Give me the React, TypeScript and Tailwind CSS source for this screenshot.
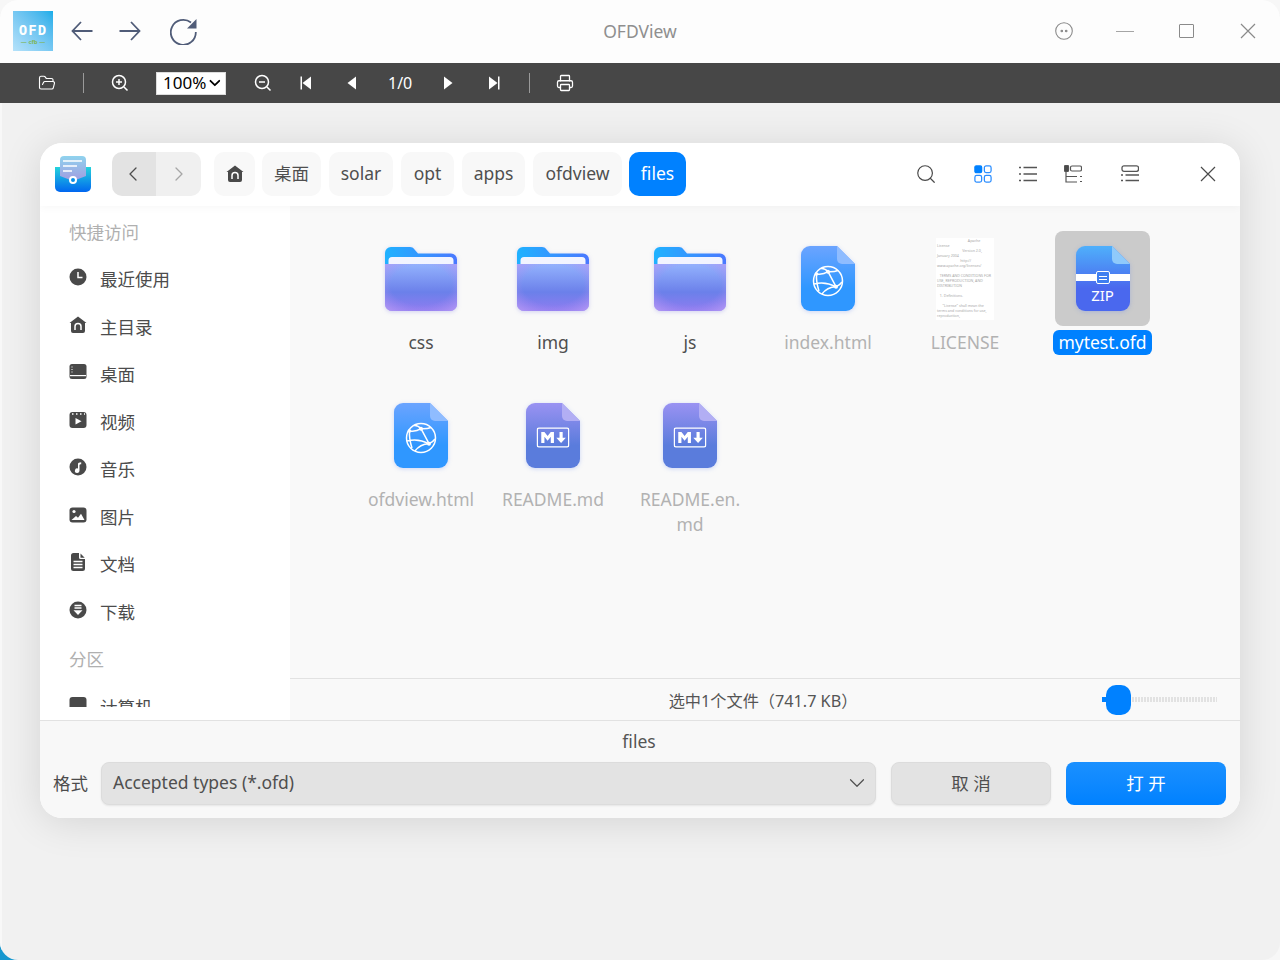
import { ReactNode } from 'react';
import { FolderOpen, Printer, Search, ChevronLeft, ChevronRight, ChevronDown } from 'lucide-react';

const sidebarItems = ['最近使用', '主目录', '桌面', '视频', '音乐', '图片', '文档', '下载'];

const crumbs = [
    { label: '桌面', w: 'w-[59px]' },
    { label: 'solar', w: 'w-[64px]' },
    { label: 'opt', w: 'w-[53px]' },
    { label: 'apps', w: 'w-[63px]' },
    { label: 'ofdview', w: 'w-[89px]' },
];

const licenseLines = [
    '                                 Apache',
    'License',
    '                           Version 2.0,',
    'January 2004',
    '                         http://',
    'www.apache.org/licenses/',
    '',
    '   TERMS AND CONDITIONS FOR',
    'USE, REPRODUCTION, AND',
    'DISTRIBUTION',
    '',
    '   1. Definitions.',
    '',
    '      "License" shall mean the',
    'terms and conditions for use,',
    'reproduction,',
];

const SideIcon = ({ index }: { index: number }) => {
    const shapes: ReactNode[] = [
        <>
            <circle cx="9" cy="9" r="8.5" fill="#494949" />
            <path d="M9 4v5.5h4.5" stroke="#fff" strokeWidth="1.5" fill="none" />
        </>,
        <>
            <path d="M9 .5 17.5 7H16v8a2 2 0 0 1-2 2H4a2 2 0 0 1-2-2V7H.5z" fill="#494949" />
            <path d="M6 14v-3.5a3 3 0 0 1 6 0V14" stroke="#fff" strokeWidth="1.5" fill="none" />
        </>,
        <>
            <rect x=".5" y="1" width="17" height="15" rx="2.5" fill="#494949" />
            <path d="M1 12.6h16" stroke="#fff" strokeWidth="1.2" />
            <path d="M2.5 4h1M2.5 6.5h1M2.5 9h1" stroke="#fff" strokeWidth="1.2" />
        </>,
        <>
            <rect x=".5" y="1" width="17" height="16" rx="3" fill="#494949" />
            <path d="M3 3h1.5M7 3h1.5M11 3h1.5M15 3h1" stroke="#fff" strokeWidth="1.5" />
            <path d="m6.5 7 6 3.2-6 3.2z" fill="#fff" />
        </>,
        <>
            <circle cx="9" cy="9" r="8.5" fill="#494949" />
            <path d="M9 12.5V6c0-1 1-1.7 3.2-1.7v2c-1 0-1.7.2-1.7.8v5.4a2.3 2.3 0 1 1-1.5-2z" fill="#fff" />
        </>,
        <>
            <rect x=".5" y="1.5" width="17" height="15" rx="3" fill="#494949" />
            <circle cx="5" cy="5.5" r="1.6" fill="#fff" />
            <path d="m2.5 14 4.5-4 2 1.7 3-4 3.5 6.3z" fill="#fff" />
        </>,
        <>
            <path d="M4.5 0H10v4.5A1.5 1.5 0 0 0 11.5 6H16v9.5a2.5 2.5 0 0 1-2.5 2.5h-9A2.5 2.5 0 0 1 2 15.5v-13A2.5 2.5 0 0 1 4.5 0z" fill="#494949" />
            <path d="M11.5.5 15.7 4.8h-4.2z" fill="#494949" />
            <path d="M4.5 8.5h9M4.5 11.5h9M4.5 14.5h9" stroke="#fff" strokeWidth="1.3" />
        </>,
        <>
            <circle cx="9" cy="9" r="8.5" fill="#494949" />
            <path d="M5.5 4.5h7M5.5 7h7" stroke="#fff" strokeWidth="1.4" />
            <path d="M4.5 9.3h9L9 14z" fill="#fff" />
        </>,
    ];
    return (
        <svg width="18" height="18" viewBox="0 0 18 18" className="shrink-0 mb-[4px]">
            {shapes[index]}
        </svg>
    );
};

const CloseX = ({ color, className }: { color: string; className?: string }) => (
    <svg width="16" height="16" viewBox="0 0 16 16" fill="none" stroke={color} strokeWidth="1.2" className={className}>
        <path d="m1 1 14 14M15 1 1 15" />
    </svg>
);

const FolderIcon = ({ id }: { id: string }) => (
    <svg width="72" height="64" viewBox="0 0 72 64" className="drop-shadow-[0_1px_2px_rgba(90,90,220,0.25)]">
        <defs>
            <linearGradient id={`${id}-back`} x1="0" y1="0" x2="1" y2="0">
                <stop offset="0" stopColor="#1fb2ff" />
                <stop offset="1" stopColor="#4a78ff" />
            </linearGradient>
            <linearGradient id={`${id}-front`} x1="0" y1="0" x2="0" y2="1">
                <stop offset="0" stopColor="#93b2fd" />
                <stop offset=".6" stopColor="#6b80ea" />
                <stop offset="1" stopColor="#8f7cf0" />
            </linearGradient>
            <radialGradient id={`${id}-glow`} cx=".5" cy=".45" r=".7">
                <stop offset=".6" stopColor="#a88cf2" stopOpacity="0" />
                <stop offset="1" stopColor="#b59af5" stopOpacity=".8" />
            </radialGradient>
        </defs>
        <path d="M6 0h19c2 0 3 .8 4.5 2.4L33 6.5h33a6 6 0 0 1 6 6V20H0V6a6 6 0 0 1 6-6z" fill={`url(#${id}-back)`} />
        <path d="M7 10h58a3.5 3.5 0 0 1 3.5 3.5V18h-65v-4.500A3.500 3.500 0 0 1 7 10z" fill="#f2f4ff" />
        <path d="M0 17h72v40a7 7 0 0 1-7 7H7a7 7 0 0 1-7-7z" fill={`url(#${id}-front)`} />
        <path d="M0 17h72v40a7 7 0 0 1-7 7H7a7 7 0 0 1-7-7z" fill={`url(#${id}-glow)`} />
    </svg>
);

const FileBody = ({ id, from, to, fold, children }: { id: string; from: string; to: string; fold: string; children?: ReactNode }) => (
    <svg width="54" height="65" viewBox="0 0 54 65" className="drop-shadow-[0_1px_2px_rgba(70,110,240,0.25)]">
        <defs>
            <linearGradient id={id} x1="0" y1="0" x2="0" y2="1">
                <stop offset="0" stopColor={from} />
                <stop offset=".65" stopColor={to} />
                <stop offset="1" stopColor={to} />
            </linearGradient>
        </defs>
        <path d="M9 0h27l18 18v38a9 9 0 0 1-9 9H9a9 9 0 0 1-9-9V9a9 9 0 0 1 9-9z" fill={`url(#${id})`} />
        <path d="M36 0l18 18H41a5 5 0 0 1-5-5z" fill={fold} />
        {children}
    </svg>
);

const GlobeIcon = ({ id }: { id: string }) => (
    <FileBody id={id} from="#6ba4ff" to="#2f97ff" fold="#8fbcff">
        <g stroke="#fff" strokeWidth="1.5" fill="none">
            <circle cx="27" cy="35" r="14.5" />
            <path d="M15.5 28Q22 29 27 25.7M27 25.7Q24 22 20 22.5M27 25.7L35 40.7M27 25.7Q33 26 37 24.5" />
            <path d="M13 38Q24 35 35 40.7M35 40.7Q26 41 21 48M35 40.7Q39 39 41 36M15.5 28Q15 36 18 45" />
        </g>
        <g fill="#fff">
            <circle cx="15.5" cy="28" r="1.8" />
            <circle cx="27" cy="25.7" r="2" />
            <circle cx="35" cy="40.7" r="2" />
        </g>
    </FileBody>
);

const MarkdownIcon = ({ id }: { id: string }) => (
    <FileBody id={id} from="#9a92f2" to="#5a7cdc" fold="#b2aef4">
        {/* the markdown mark, outlined box with solid M and arrow */}
        <svg x="10.5" y="24" width="33" height="21" viewBox="0 0 208 128">
            <rect x="5" y="5" width="198" height="118" rx="10" fill="none" stroke="#fff" strokeWidth="9" />
            <path d="M30 98V30h20l20 25 20-25h20v68H90V59L70 84 50 59v39zM155 98l-30-33h20V30h20v35h20z" fill="#fff" />
        </svg>
    </FileBody>
);

const ZipIcon = () => (
    <div className="relative">
        <FileBody id="zip-file" from="#4fb0fb" to="#4a68ee" fold="#8fcafb" />
        <div className="absolute left-0 right-0 top-[28px] h-[7px] bg-white" />
        <div className="absolute left-[20px] top-[25px] w-[14px] h-[13px] bg-[#3f7ff0] border border-white rounded-[2px] flex flex-col items-center justify-center gap-[2px]">
            <div className="w-[8px] h-px bg-white" />
            <div className="w-[8px] h-px bg-white" />
        </div>
        <div className="absolute left-0 right-0 top-[40px] text-center text-white text-[15px] leading-[18px]">ZIP</div>
    </div>
);

const LicenseThumb = () => (
    <div className="w-[58px] h-[82px] bg-white overflow-hidden px-px">
        {licenseLines.map((line, i) => (
            <div key={i} className="h-[5px] text-[3.6px] leading-[5px] text-[#a8a8a8] whitespace-pre">{line}</div>
        ))}
    </div>
);

const FileCell = ({ icon, label, selected }: { icon: ReactNode; label: ReactNode; selected?: boolean }) => (
    <div className="flex flex-col items-center">
        <div className={`w-[95px] h-[95px] rounded-[8px] flex items-center justify-center ${selected ? 'bg-[#cbcbcb]' : ''}`}>
            {icon}
        </div>
        <div className={`mt-[4px] text-center text-[17.5px] leading-[25px] whitespace-nowrap ${selected ? 'bg-[#0081ff] text-white rounded-[6px] px-[5px]' : ''}`}>
            {label}
        </div>
    </div>
);

const Triangle = ({ dir, bar }: { dir: 'left' | 'right'; bar?: boolean }) => (
    <svg width="14" height="16" viewBox="0 0 14 16" fill="#fff">
        {dir === 'left' ? <path d="M12 1.5v13L3.5 8z" /> : <path d="M2 1.5v13L10.5 8z" />}
        {bar && (dir === 'left' ? <rect x="1.5" y="1.5" width="1.5" height="13" /> : <rect x="11" y="1.5" width="1.5" height="13" />)}
    </svg>
);

const ZoomGlass = ({ plus }: { plus?: boolean }) => (
    <svg width="18" height="18" viewBox="0 0 18 18" fill="none" stroke="#fff" strokeWidth="1.5">
        <circle cx="8" cy="8" r="6.5" />
        <path d="m13 13 3.5 3.5M5 8h6" />
        {plus && <path d="M8 5v6" />}
    </svg>
);

export default function App() {
    return (
        <div className="relative w-[1280px] h-[960px] overflow-hidden bg-[#f7f7f7] font-['Noto_Sans','Noto_Sans_CJK_SC',sans-serif]">
            {/* wallpaper peeking through the window corner */}
            <div className="absolute left-0 bottom-0 w-[24px] h-[24px] bg-[#1597cf]" />
            <div className="relative h-full rounded-[18px] overflow-hidden bg-[#f1f1f1] flex flex-col">
                {/* title bar */}
                <div className="h-[63px] shrink-0 bg-[#fdfdfd] flex items-center relative">
                    <div className="ml-[13px] mt-[-1px] w-[40px] h-[40px] bg-gradient-to-tr from-[#b5e2fa] to-[#12ade9] flex flex-col items-center justify-center">
                        <span className="text-white text-[14px] leading-[14px] font-bold tracking-[1px] font-['DejaVu_Sans_Mono',monospace] mt-[7px]">OFD</span>
                        <span className="text-[#7fb65c] text-[6px] leading-[10px] font-bold">— cfb —</span>
                    </div>
                    <div className="ml-[18px] mt-[-1px] flex items-center gap-[26px]">
                        <svg width="22" height="20" viewBox="0 0 22 20" fill="none" stroke="#505c78" strokeWidth="1.8">
                            <path d="M21.5 10H1.5M10 1 1.5 10l8.5 9" />
                        </svg>
                        <svg width="22" height="20" viewBox="0 0 22 20" fill="none" stroke="#505c78" strokeWidth="1.8">
                            <path d="M.5 10h20M12 1l8.5 9-8.5 9" />
                        </svg>
                        <svg width="28" height="28" viewBox="0 0 28 28" fill="none" className="ml-[3px]">
                            <path d="M21 5.5A12.5 12.5 0 1 0 25.8 15" stroke="#505c78" strokeWidth="1.8" />
                            <path d="M26.5 2v9.5H17z" fill="#505c78" />
                        </svg>
                    </div>
                    <div className="absolute left-0 right-0 text-center text-[17.5px] text-[#8f8f8f] pointer-events-none">OFDView</div>
                    <div className="ml-auto mr-[24px] mt-[-1px] flex items-center">
                        <svg width="18" height="18" viewBox="0 0 18 18" fill="none" stroke="#8a8a8a" strokeWidth="1.1" className="-mr-[1px]">
                            <circle cx="9" cy="9" r="8.3" />
                            <circle cx="6.8" cy="9" r=".8" fill="#8a8a8a" />
                            <circle cx="11.2" cy="9" r=".8" fill="#8a8a8a" />
                        </svg>
                        <div className="ml-[44px] w-[18px] h-px bg-[#a5a5a5]" />
                        <div className="ml-[45px] w-[15px] h-[14px] border border-[#8a8a8a] rounded-[1px]" />
                        <CloseX color="#8a8a8a" className="ml-[46px]" />
                    </div>
                </div>

                {/* pdf style toolbar */}
                <div className="h-[40px] shrink-0 bg-[#474747] flex items-center text-white">
                    <FolderOpen className="ml-[38px]" size={18} strokeWidth={1.5} />
                    <div className="ml-[27px] w-px h-[20px] bg-[#9a9a9a]" />
                    <div className="ml-[27px]"><ZoomGlass plus /></div>
                    <div className="ml-[27px] w-[70px] h-[23px] bg-white text-black text-[17px] flex items-center pl-[6px] border border-[#ddd]">
                        100%
                        <ChevronDown className="ml-auto mr-[1px]" size={18} strokeWidth={2.4} />
                    </div>
                    <div className="ml-[28px]"><ZoomGlass /></div>
                    <div className="ml-[27px]"><Triangle dir="left" bar /></div>
                    <div className="ml-[31px]"><Triangle dir="left" /></div>
                    <span className="ml-[30px] w-[24px] text-center text-[16px] whitespace-nowrap">1/0</span>
                    <div className="ml-[30px]"><Triangle dir="right" /></div>
                    <div className="ml-[31px]"><Triangle dir="right" bar /></div>
                    <div className="ml-[28px] w-px h-[20px] bg-[#9a9a9a]" />
                    <Printer className="ml-[26px]" size={18} strokeWidth={1.7} />
                </div>

                {/* file dialog */}
                <div className="flex-1 border-l-2 border-[#f8f8f8] pt-[40px] pl-[38px]">
                    <div className="w-[1200px] h-[675px] rounded-[22px] overflow-hidden bg-white flex flex-col shadow-[0_4px_40px_rgba(0,0,0,0.12)]">
                        <div className="relative z-10 h-[63px] shrink-0 bg-white flex items-center pb-[2px] shadow-[0_2px_8px_rgba(0,0,0,0.03)]">
                            <svg width="36" height="36" viewBox="0 0 36 36" className="ml-[15px] shrink-0">
                                <defs>
                                    <linearGradient id="dlg-body" x1="0" y1="0" x2="0" y2="1">
                                        <stop offset="0" stopColor="#25d3dc" />
                                        <stop offset="1" stopColor="#0066f0" />
                                    </linearGradient>
                                    <linearGradient id="dlg-sheet" x1="0" y1="0" x2="0" y2="1">
                                        <stop offset="0" stopColor="#8fd3ee" />
                                        <stop offset="1" stopColor="#a29be0" />
                                    </linearGradient>
                                </defs>
                                <path d="M0 11h36v20a5 5 0 0 1-5 5H5a5 5 0 0 1-5-5z" fill="url(#dlg-body)" />
                                <path d="M5 4a4 4 0 0 1 4-4h18a4 4 0 0 1 4 4v16l-13 5-13-5z" fill="url(#dlg-sheet)" />
                                <path d="M8 5h19M8 10h14M8 15h9" stroke="#fff" strokeWidth="1.7" />
                                <circle cx="18" cy="24" r="3" fill="#0a8fe8" stroke="#fff" strokeWidth="2" />
                            </svg>
                            <div className="ml-[21px] flex h-[44px] w-[89px] rounded-[10px] overflow-hidden">
                                <div className="w-[44px] bg-[#e3e3e3] flex items-center justify-center text-[#4c4c4c]">
                                    <ChevronLeft className="-ml-[2px]" size={24} strokeWidth={1.3} />
                                </div>
                                <div className="flex-1 bg-[#f0f0f0] flex items-center justify-center text-[#a6a6a6]">
                                    <ChevronRight size={24} strokeWidth={1.3} />
                                </div>
                            </div>
                            <div className="ml-[13px] w-[41px] h-[44px] rounded-[10px] bg-[#f8f8f8] flex items-center justify-center">
                                <div className="mt-[4px]"><SideIcon index={1} /></div>
                            </div>
                            <div className="ml-[7px] flex items-center gap-[8px]">
                                {crumbs.map((c) => (
                                    <div key={c.label} className={`${c.w} h-[44px] rounded-[10px] bg-[#f8f8f8] flex items-center justify-center text-[17.5px] text-[#4f4f4f]`}>
                                        {c.label}
                                    </div>
                                ))}
                                <div className="w-[57px] h-[44px] -ml-px rounded-[10px] bg-[#0081ff] flex items-center justify-center text-[17.5px] text-white">files</div>
                            </div>
                            <div className="ml-auto mr-[24px] flex items-center">
                                <Search className="text-[#4a4a4a]" size={22} strokeWidth={1.3} />
                                <svg width="18" height="18" viewBox="0 0 20 20" fill="none" stroke="#2c8eff" strokeWidth="1.4" className="ml-[37px]">
                                    <rect x="1" y="1" width="7.5" height="7.5" rx="1.5" fill="#0081ff" stroke="#0081ff" />
                                    <rect x="11.5" y="1" width="7.5" height="7.5" rx="2" />
                                    <rect x="1" y="11.5" width="7.5" height="7.5" rx="2" />
                                    <rect x="11.5" y="11.5" width="7.5" height="7.5" rx="2" />
                                </svg>
                                <svg width="18" height="18" viewBox="0 0 18 18" fill="none" stroke="#555" strokeWidth="1.3" className="ml-[27px]">
                                    <path d="M4.5 2.5H18M4.5 9H18M4.5 15.5H18M0 2.5h2M0 9h2M0 15.5h2" />
                                </svg>
                                <svg width="18" height="18" viewBox="0 0 18 18" fill="none" stroke="#555" strokeWidth="1.2" className="ml-[27px]">
                                    <rect x=".5" y=".5" width="4" height="6" rx="1" fill="#4a4a4a" />
                                    <rect x="6.5" y="1" width="11" height="5" rx="1.5" />
                                    <path d="M2 7v10h11M2 11.5h11M16 11.5h2M16 16.5h2" />
                                </svg>
                                <svg width="18" height="18" viewBox="0 0 18 18" fill="none" stroke="#555" strokeWidth="1.3" className="ml-[39px]">
                                    <rect x="1" y=".8" width="16.5" height="5.5" rx="2" />
                                    <path d="M4.5 10H18M4.5 15.5H18M0 10h2M0 15.5h2" />
                                </svg>
                                <CloseX color="#4a4a4a" className="ml-[61px]" />
                            </div>
                        </div>

                        <div className="h-[514px] shrink-0 flex">
                            <div className="w-[250px] shrink-0 bg-white pb-[13px]">
                                <div className="h-full overflow-hidden pt-[2px] pl-[29px]">
                                    <div className="h-[47.5px] flex items-center text-[17.5px] text-[#b0b0b0]">快捷访问</div>
                                    {sidebarItems.map((name, i) => (
                                        <div key={name} className="h-[47.5px] flex items-center text-[17.5px] text-[#4c4c4c]">
                                            <SideIcon index={i} />
                                            <span className="ml-[13px]">{name}</span>
                                        </div>
                                    ))}
                                    <div className="h-[47.5px] flex items-center text-[17.5px] text-[#b0b0b0]">分区</div>
                                    <div className="h-[47.5px] flex items-center text-[17.5px] text-[#4c4c4c]">
                                        <svg width="18" height="18" viewBox="0 0 18 18" className="shrink-0 mb-[4px]">
                                            <rect x=".5" y="1" width="17" height="14" rx="3" fill="#494949" />
                                        </svg>
                                        <span className="ml-[13px]">计算机</span>
                                    </div>
                                </div>
                            </div>
                            <div className="flex-1 flex flex-col bg-[#f9f9f9]">
                                <div className="flex-1 pt-[25px] pl-[62px]">
                                    <div className="grid grid-cols-[138px_126px_148px_128px_146px_129px] gap-y-[33px] text-[#b2b2b2]">
                                        <FileCell icon={<FolderIcon id="css" />} label={<span className="text-[#4f4f4f]">css</span>} />
                                        <FileCell icon={<FolderIcon id="img" />} label={<span className="text-[#4f4f4f]">img</span>} />
                                        <FileCell icon={<FolderIcon id="js" />} label={<span className="text-[#4f4f4f]">js</span>} />
                                        <FileCell icon={<GlobeIcon id="index" />} label="index.html" />
                                        <FileCell icon={<LicenseThumb />} label="LICENSE" />
                                        <FileCell icon={<ZipIcon />} label="mytest.ofd" selected />
                                        <FileCell icon={<GlobeIcon id="ofdview" />} label="ofdview.html" />
                                        <FileCell icon={<MarkdownIcon id="readme" />} label="README.md" />
                                        <FileCell icon={<MarkdownIcon id="readme-en" />} label={<>README.en.<br />md</>} />
                                    </div>
                                </div>
                                <div className="h-[42px] shrink-0 border-t border-[#e2e2e2] flex items-center">
                                    <div className="ml-[134px] mt-[3px] flex-1 text-center text-[16.2px] text-[#555] whitespace-nowrap">选中1个文件（741.7 KB）</div>
                                    <div className="w-[115px] mr-[23px] relative flex items-center">
                                        <div className="w-full h-[5px] bg-[repeating-linear-gradient(90deg,#e2e2e2_0,#e2e2e2_2px,transparent_2px,transparent_3px)]" />
                                        <div className="absolute left-0 w-[4px] h-[5px] bg-[#0081ff]" />
                                        <div className="absolute left-[4px] w-[25px] h-[30px] rounded-[10px] bg-[#0081ff]" />
                                    </div>
                                </div>
                            </div>
                        </div>

                        <div className="flex-1 bg-[#f8f8f8] border-t border-[#e2e2e2] flex flex-col">
                            <div className="h-[41px] pt-[8px] pr-[2px] text-center text-[17.5px] leading-[25px] text-[#555]">files</div>
                            <div className="flex items-center pl-[13px]">
                                <span className="text-[17.5px] text-[#4c4c4c] w-[48px] whitespace-nowrap">格式</span>
                                <div className="w-[775px] h-[43px] rounded-[8px] bg-[#e3e3e3] border border-[#dcdcdc] shadow-[0_1px_2px_rgba(0,0,0,0.08)] flex items-center pl-[11px] pr-[5px] pb-[2px] text-[17.5px] text-[#4f4f4f]">
                                    Accepted types (*.ofd)
                                    <ChevronDown className="ml-auto mt-[1px]" size={26} strokeWidth={1.1} />
                                </div>
                                <button className="ml-[15px] w-[160px] h-[43px] rounded-[8px] bg-[#e3e3e3] border border-[#dcdcdc] shadow-[0_1px_2px_rgba(0,0,0,0.08)] text-[17.5px] text-[#4f4f4f]">取 消</button>
                                <button className="ml-[15px] w-[160px] h-[43px] rounded-[8px] bg-gradient-to-b from-[#1a90ff] to-[#0081ff] text-[17.5px] text-white">打 开</button>
                            </div>
                        </div>
                    </div>
                </div>
            </div>
        </div>
    );
}
